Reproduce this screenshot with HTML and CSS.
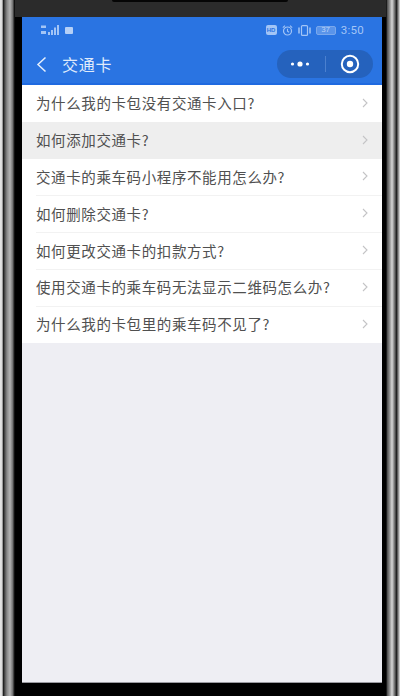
FILE: index.html
```html
<!DOCTYPE html>
<html lang="zh">
<head>
<meta charset="utf-8">
<title>交通卡</title>
<link rel="stylesheet" href="styles.css">
</head>
<body>
<div class="phone">
  <div class="notch"></div>
  <div class="bezel">
    <main class="screen">
      <header class="appbar">
        <div class="status">
          <div class="status-left">
            <svg class="signal" width="18" height="10" viewBox="0 0 18 10"><g fill="#a3c5f6"><rect x="0" y="0.5" width="5" height="2.5"/><rect x="0" y="6" width="5" height="3"/><rect x="7" y="7" width="2" height="3"/><rect x="10" y="5" width="2" height="5"/><rect x="13" y="2.5" width="2" height="7.5"/><rect x="16" y="0" width="2" height="10"/></g></svg>
            <span class="wechat-dot"></span>
          </div>
          <div class="status-right">
            <span class="hd">HD</span>
            <svg width="11" height="11" viewBox="0 0 11 11"><circle cx="5.5" cy="6" r="4" fill="none" stroke="#a3c5f6" stroke-width="1.2"/><path d="M5.5 3.8v2.4l1.6 1M.8 2.6 3 .6M10.2 2.6 8 .6" fill="none" stroke="#a3c5f6" stroke-width="1.1"/></svg>
            <svg width="13" height="11" viewBox="0 0 13 11"><rect x="3.5" y="0.6" width="6" height="9.8" rx="1" fill="none" stroke="#a3c5f6" stroke-width="1.2"/><path d="M1 2.5v6M12 2.5v6" stroke="#a3c5f6" stroke-width="1.5"/></svg>
            <span class="battery"><span class="battery-level">37</span></span>
            <span class="clock">3:50</span>
          </div>
        </div>
        <div class="navbar">
          <svg class="back" width="11" height="17" viewBox="0 0 11 17"><path d="M9.5 1.5 2 8.5l7.5 7" fill="none" stroke="#e6effc" stroke-width="1.5"/></svg>
          <h1 class="title">交通卡</h1>
          <div class="capsule">
            <svg width="20" height="6" viewBox="0 0 20 6"><circle cx="2.5" cy="3" r="1.6" fill="#fff"/><circle cx="10" cy="3" r="2.6" fill="#fff"/><circle cx="17.5" cy="3" r="1.6" fill="#fff"/></svg>
            <span class="capsule-line"></span>
            <svg width="20" height="20" viewBox="0 0 20 20"><circle cx="10" cy="10" r="8.2" fill="none" stroke="#fff" stroke-width="2"/><circle cx="10" cy="10" r="3.2" fill="#fff"/></svg>
          </div>
        </div>
      </header>
      <ul class="list">
        <li class="row"><span>为什么我的卡包没有交通卡入口?</span><svg class="chev" width="6" height="10" viewBox="0 0 6 10"><path d="M1 1l4 4-4 4" fill="none" stroke="#c4c4c6" stroke-width="1.1"/></svg></li>
        <li class="row active"><span>如何添加交通卡?</span><svg class="chev" width="6" height="10" viewBox="0 0 6 10"><path d="M1 1l4 4-4 4" fill="none" stroke="#c4c4c6" stroke-width="1.1"/></svg></li>
        <li class="row"><span>交通卡的乘车码小程序不能用怎么办?</span><svg class="chev" width="6" height="10" viewBox="0 0 6 10"><path d="M1 1l4 4-4 4" fill="none" stroke="#c4c4c6" stroke-width="1.1"/></svg></li>
        <li class="row"><span>如何删除交通卡?</span><svg class="chev" width="6" height="10" viewBox="0 0 6 10"><path d="M1 1l4 4-4 4" fill="none" stroke="#c4c4c6" stroke-width="1.1"/></svg></li>
        <li class="row"><span>如何更改交通卡的扣款方式?</span><svg class="chev" width="6" height="10" viewBox="0 0 6 10"><path d="M1 1l4 4-4 4" fill="none" stroke="#c4c4c6" stroke-width="1.1"/></svg></li>
        <li class="row"><span>使用交通卡的乘车码无法显示二维码怎么办?</span><svg class="chev" width="6" height="10" viewBox="0 0 6 10"><path d="M1 1l4 4-4 4" fill="none" stroke="#c4c4c6" stroke-width="1.1"/></svg></li>
        <li class="row"><span>为什么我的卡包里的乘车码不见了?</span><svg class="chev" width="6" height="10" viewBox="0 0 6 10"><path d="M1 1l4 4-4 4" fill="none" stroke="#c4c4c6" stroke-width="1.1"/></svg></li>
      </ul>
    </main>
  </div>
</div>
</body>
</html>
```
FILE: styles.css
```css
* { box-sizing: border-box; }
html, body { margin: 0; height: 100%; }
body { width: 400px; height: 696px; overflow: hidden; background: #fff; font-family: "Noto Sans CJK SC", "Liberation Sans", sans-serif; }
.phone { position: relative; width: 400px; height: 696px;
  background: linear-gradient(90deg, #e8e8e8 0, #d8d8d8 2px, #222 3.5px, #555 5px, #8a8a8a 7px, #b4b4b4 10px, #777 12.5px, #111 14.5px, #000 16px, #000 386px, #555 387.5px, #999 390px, #d8d8d8 392px, #888 394px, #222 396.5px, #777 398px, #e8e8e8 400px); }
.notch { position: absolute; left: 112px; top: 0; width: 176px; height: 2px; background: #050505; border-radius: 0 0 8px 8px; z-index: 1; }
.bezel { position: absolute; left: 15px; right: 14px; top: 0; bottom: 0; padding: 17px 4px 14px 7px;
  background: linear-gradient(180deg, #2b2b2b 0, #2b2b2b 17px, #000 17px); }
.screen { height: 100%; display: flex; flex-direction: column; background: #eeeef3; box-shadow: 0 1px 0 #9a9aa0; }
.appbar { height: 68px; flex: none; background: #2a74e2; border-bottom: 2px solid #1f6ae0; }
.status { height: 23px; padding: 3px 18px 0 19px; display: flex; align-items: center; justify-content: space-between; }
.status-left, .status-right { display: flex; align-items: center; }
.status-left { gap: 6px; }
.status-right { gap: 5px; }
.wechat-dot { width: 8px; height: 7px; border-radius: 1px; background: #b5d0f7; }
.hd { width: 11px; height: 10px; border-radius: 2px; background: #a3c5f6; color: #2a74e2; font: 700 6px/10px "Liberation Sans", sans-serif; text-align: center; }
.battery { width: 20px; height: 9px; border: 1px solid #7aa8ec; border-radius: 2px; background: #5a94ea; display: flex; align-items: center; justify-content: center; }
.battery-level { color: #b9d2f7; font: 8px/8px "Liberation Sans", sans-serif; }
.clock { color: #a3c5f6; font: 11.5px/12px "Roboto", "Liberation Sans", sans-serif; letter-spacing: .3px; }
.navbar { height: 43px; padding: 5px 9px 0 14px; display: flex; align-items: center; }
.back { flex: none; }
.title { margin: 0 0 0 15px; flex: 1; color: #dfeafb; font-size: 16px; font-weight: 400; letter-spacing: .8px; }
.capsule { width: 96px; height: 28px; border-radius: 14px; background: #2562bd; display: flex; align-items: center; justify-content: space-between; padding: 0 13px; }
.capsule-line { width: 1px; height: 16px; background: #4b80cf; }
.list { margin: 0; padding: 0; list-style: none; background: #fff; }
.row { height: 36.8px; padding: 0 14px 1px 14px; display: flex; align-items: center; justify-content: space-between; color: #505050; font-size: 14.5px; letter-spacing: .6px; position: relative; }
.row + .row::before { content: ""; position: absolute; left: 14px; right: 0; top: 0; height: 1px; background: #f2f2f2; }
.row.active { background: #eeeeee; }
.row.active::before, .row.active + .row::before { display: none; }
.chev { flex: none; }
```
